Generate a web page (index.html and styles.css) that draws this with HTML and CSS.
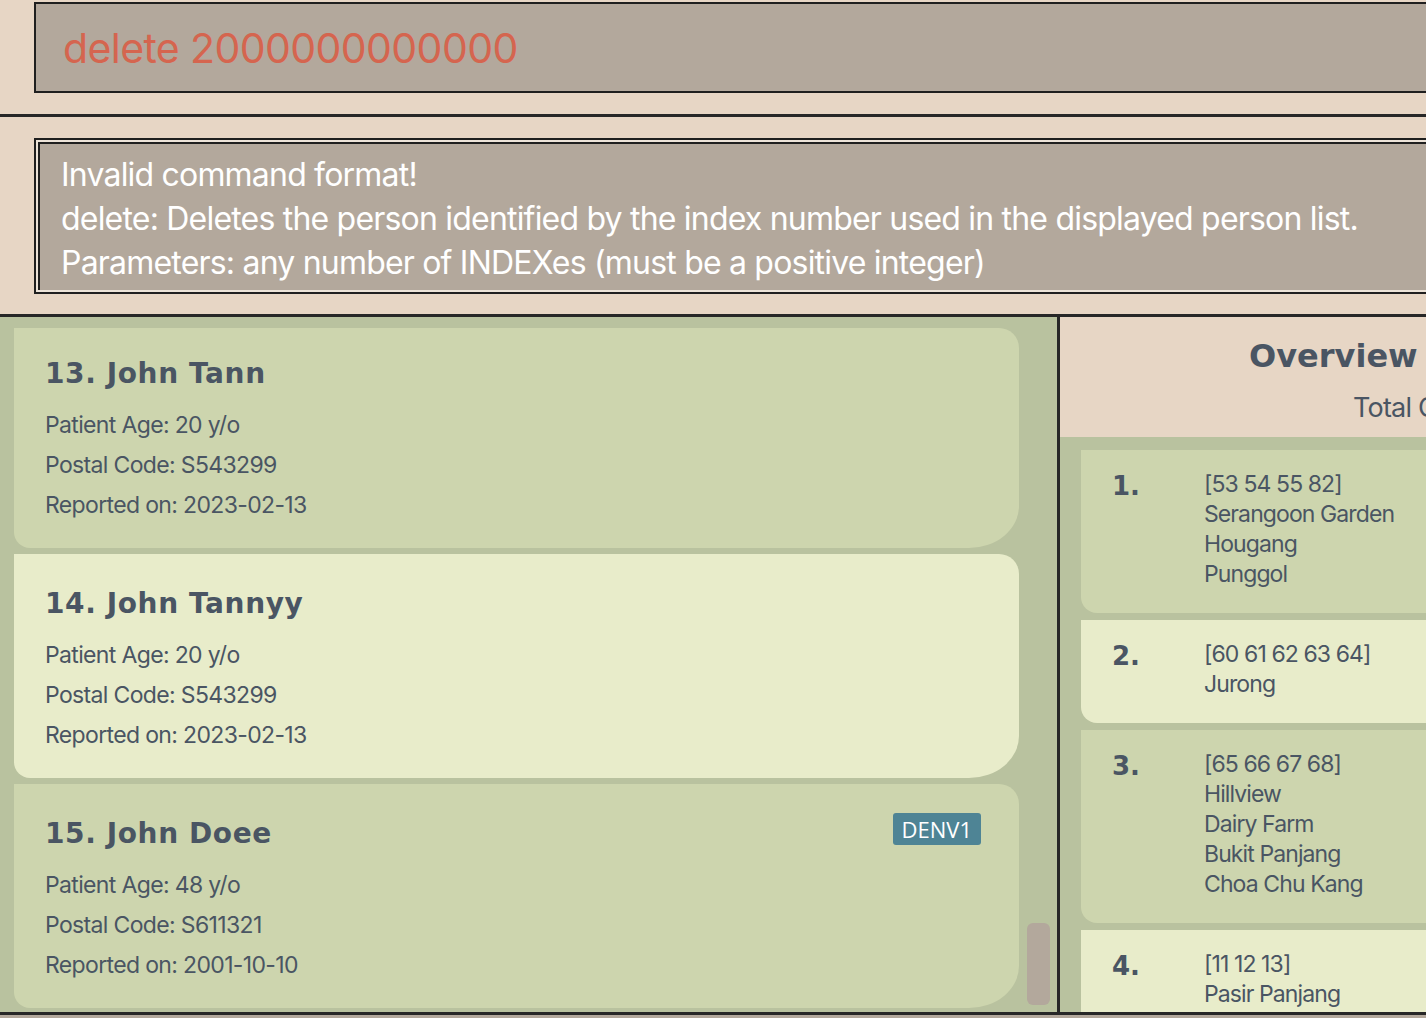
FILE: index.html
```html
<!DOCTYPE html>
<html>
<head>
<meta charset="utf-8">
<link rel="stylesheet" href="styles.css">
</head>
<body>
<div class="app">
  <div class="cmd-area">
    <div class="cmd-box">delete 2000000000000</div>
  </div>
  <div class="rule"></div>
  <div class="result-area">
    <div class="result-outer">
      <div class="result-box">
        <div>Invalid command format!</div>
        <div>delete: Deletes the person identified by the index number used in the displayed person list.</div>
        <div>Parameters: any number of INDEXes (must be a positive integer)</div>
      </div>
    </div>
  </div>
  <div class="rule"></div>
  <div class="main">
    <div class="person-panel">
      <div class="person-list">
        <div class="card card-dark card-first">
          <div class="card-head"><div class="card-title">13. John Tann</div></div>
          <div class="card-line">Patient Age: 20 y/o</div>
          <div class="card-line">Postal Code: S543299</div>
          <div class="card-line">Reported on: 2023-02-13</div>
        </div>
        <div class="card card-light">
          <div class="card-head"><div class="card-title">14. John Tannyy</div></div>
          <div class="card-line">Patient Age: 20 y/o</div>
          <div class="card-line">Postal Code: S543299</div>
          <div class="card-line">Reported on: 2023-02-13</div>
        </div>
        <div class="card card-dark">
          <div class="card-head"><div class="card-title">15. John Doee</div><span class="badge">DENV1</span></div>
          <div class="card-line">Patient Age: 48 y/o</div>
          <div class="card-line">Postal Code: S611321</div>
          <div class="card-line">Reported on: 2001-10-10</div>
        </div>
      </div>
      <div class="scroll-thumb"></div>
    </div>
    <div class="vrule"></div>
    <div class="overview-panel">
      <div class="overview-head">
        <div class="overview-title">Overview</div>
        <div class="overview-total">Total Clusters</div>
      </div>
      <div class="overview-list">
        <div class="ov-card card-dark">
          <div class="ov-num">1.</div>
          <div class="ov-text">
            <div>[53 54 55 82]</div>
            <div>Serangoon Garden</div>
            <div>Hougang</div>
            <div>Punggol</div>
          </div>
        </div>
        <div class="ov-card card-light">
          <div class="ov-num">2.</div>
          <div class="ov-text">
            <div>[60 61 62 63 64]</div>
            <div>Jurong</div>
          </div>
        </div>
        <div class="ov-card card-dark">
          <div class="ov-num">3.</div>
          <div class="ov-text">
            <div>[65 66 67 68]</div>
            <div>Hillview</div>
            <div>Dairy Farm</div>
            <div>Bukit Panjang</div>
            <div>Choa Chu Kang</div>
          </div>
        </div>
        <div class="ov-card card-light">
          <div class="ov-num">4.</div>
          <div class="ov-text">
            <div>[11 12 13]</div>
            <div>Pasir Panjang</div>
          </div>
        </div>
      </div>
    </div>
  </div>
  <div class="rule"></div>
  <div class="status"></div>
</div>
</body>
</html>
```
FILE: styles.css
```css
html, body {
  margin: 0;
  padding: 0;
  overflow: hidden;
}
body {
  background: #e7d6c5;
  font-family: Inter, "Noto Sans", sans-serif;
  width: 1426px;
  height: 1018px;
}
.app {
  display: flex;
  flex-direction: column;
  height: 1018px;
  overflow: hidden;
}
.rule {
  height: 3px;
  background: #272727;
  flex: none;
}
.cmd-area {
  padding: 2px 0 21px 34px;
  flex: none;
}
.cmd-box {
  width: 1420px;
  height: 87px;
  border: 2px solid #1f1f1f;
  background: #b3a89c;
  color: #d5654f;
  font-size: 41px;
  letter-spacing: -0.6px;
  line-height: 89px;
  padding-left: 27px;
  box-sizing: content-box;
  white-space: nowrap;
}
.result-area {
  padding: 21px 0 20px 34px;
  flex: none;
}
.result-outer {
  width: 1420px;
  border: 2px solid #1f1f1f;
  padding: 2px 0 2px 2px;
  background: #ece3d8;
}
.result-box {
  background: #b3a89c;
  border-top: 2px solid #1f1f1f;
  border-left: 2px solid #1f1f1f;
  height: 148px;
  padding: 9px 0 0 21px;
  box-sizing: border-box;
  color: #ffffff;
  font-size: 32px;
  letter-spacing: -0.8px;
  line-height: 44px;
  white-space: nowrap;
}
.main {
  display: flex;
  height: 695px;
  flex: none;
}
.person-panel {
  position: relative;
  width: 1057px;
  flex: none;
  background: #b9c29f;
  overflow: hidden;
}
.person-list {
  display: flex;
  flex-direction: column;
  gap: 6px;
  padding: 11px 0 0 14px;
}
.card {
  width: 1005px;
  box-sizing: border-box;
  padding: 29px 38px 23px 31px;
  border-radius: 0 20px 50px 16px / 0 20px 42px 16px;
  color: #4a5563;
}
.card-first {
  padding-top: 25px;
}
.card-dark {
  background: #cdd5ae;
}
.card-light {
  background: #e8ecca;
}
.card-head {
  display: flex;
  justify-content: space-between;
  align-items: flex-start;
  height: 34px;
  margin-top: 4px;
  margin-bottom: 14px;
}
.card-title {
  font-family: "DejaVu Sans", Verdana, sans-serif;
  font-weight: bold;
  font-size: 28px;
  line-height: 34px;
  letter-spacing: 0.6px;
}
.badge {
  background: #4e8495;
  color: #ffffff;
  font-family: "Open Sans", sans-serif;
  font-size: 22px;
  line-height: 32px;
  padding: 0 9px 0 9px;
  border-radius: 3px;
  margin-top: -4px;
}
.card-line {
  font-size: 23px;
  line-height: 40px;
  letter-spacing: -0.65px;
}
.scroll-thumb {
  position: absolute;
  left: 1027px;
  top: 606px;
  width: 23px;
  height: 82px;
  border-radius: 6px;
  background: #b3a89c;
}
.vrule {
  width: 3px;
  flex: none;
  background: #272727;
}
.overview-panel {
  flex: 1;
  min-width: 0;
  display: flex;
  flex-direction: column;
  overflow: hidden;
}
.overview-head {
  height: 120px;
  flex: none;
  background: #e7d6c5;
  color: #4a5563;
  box-sizing: border-box;
  padding-top: 19px;
  white-space: nowrap;
}
.overview-title {
  font-family: "DejaVu Sans", Verdana, sans-serif;
  font-weight: bold;
  font-size: 32px;
  line-height: 40px;
  letter-spacing: 0;
  padding-left: 189px;
}
.overview-total {
  font-size: 27px;
  line-height: 36px;
  letter-spacing: -0.8px;
  padding-left: 293px;
  margin-top: 14px;
}
.overview-list {
  flex: 1;
  background: #b9c29f;
  padding: 13px 0 0 21px;
  display: flex;
  flex-direction: column;
  gap: 7px;
  overflow: hidden;
}
.ov-card {
  display: flex;
  width: 500px;
  flex: none;
  box-sizing: border-box;
  padding: 19px 0 24px 31px;
  border-radius: 0 20px 20px 16px;
  color: #4a5563;
}
.ov-num {
  width: 92px;
  flex: none;
  font-family: "DejaVu Sans", Verdana, sans-serif;
  font-weight: bold;
  font-size: 26px;
  line-height: 34px;
}
.ov-text {
  font-size: 23px;
  line-height: 30px;
  letter-spacing: -0.9px;
}
.status {
  flex: 1;
  background: #b3a89c;
}
```
